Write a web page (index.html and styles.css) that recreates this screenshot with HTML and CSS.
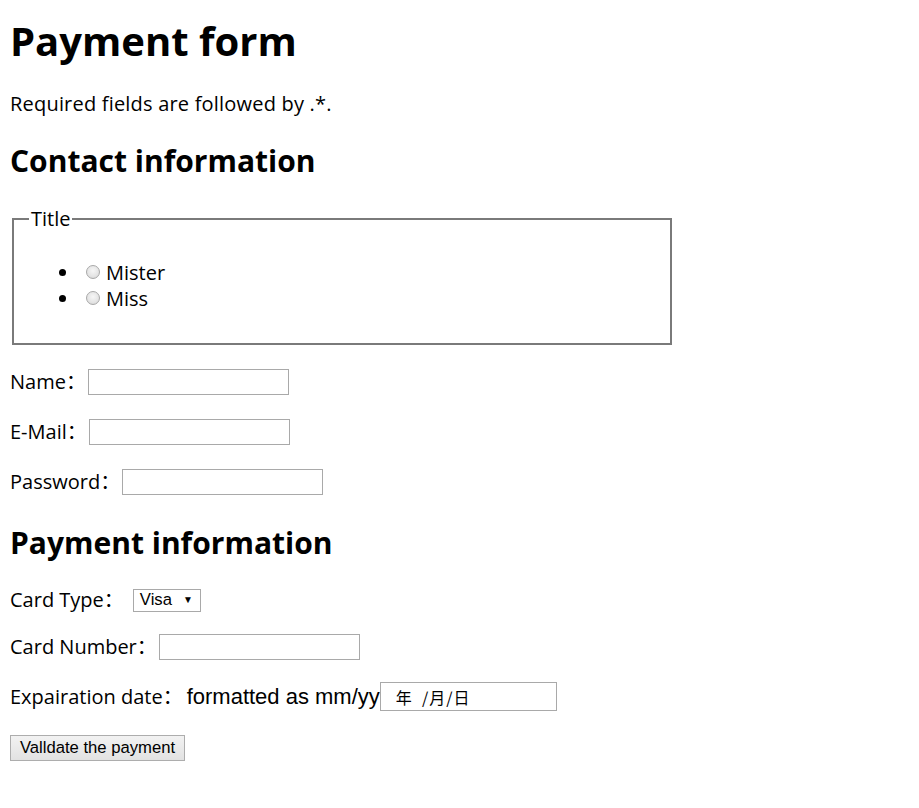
FILE: index.html
```html
<!DOCTYPE html>
<html lang="en">
<head>
<meta charset="utf-8">
<title>Payment form</title>
<link rel="stylesheet" href="styles.css">
</head>
<body>
<form class="form">
  <h1 class="title">Payment form</h1>
  <p class="note">Required fields are followed by .*.</p>
  <section>
    <h2 class="subtitle">Contact information</h2>
    <fieldset class="group">
      <legend class="legend">Title</legend>
      <ul class="choices">
        <li class="choice"><span class="radio"></span><label class="choice-label">Mister</label></li>
        <li class="choice"><span class="radio"></span><label class="choice-label">Miss</label></li>
      </ul>
    </fieldset>
    <p class="row"><label class="lbl">Name：</label><input class="field" type="text"></p>
    <p class="row"><label class="lbl">E-Mail：</label><input class="field" type="text"></p>
    <p class="row"><label class="lbl">Password：</label><input class="field" type="text"></p>
  </section>
  <section>
    <h2 class="subtitle sub2">Payment information</h2>
    <p class="row"><label class="lbl">Card Type：</label><span class="select">Visa<span class="arrow">▼</span></span></p>
    <p class="row row-cn"><label class="lbl">Card Number：</label><input class="field" type="text"></p>
    <p class="row row-date"><label class="lbl tight">Expairation date：</label><span class="hint">formatted as mm/yy</span><span class="date">年 &nbsp;/月/日</span></p>
    <p class="row"><button class="btn" type="button">Valldate the payment</button></p>
  </section>
</form>
</body>
</html>
```

FILE: styles.css
```css
html, body {
  margin: 0;
  padding: 0;
  background: #fff;
}
body {
  padding: 0 10px;
  font-family: "Open Sans", "Noto Sans CJK SC", sans-serif;
  font-size: 20px;
  line-height: 26px;
  color: #000;
}
.form {
  margin: 0;
}
.title {
  font-size: 40px;
  line-height: 52px;
  font-weight: 700;
  margin: 15px 0 0 0;
}
.note {
  margin: 24px 0 0 0;
  letter-spacing: 0.2px;
}
.subtitle {
  font-size: 30px;
  line-height: 40px;
  font-weight: 700;
  margin: 24px 0 0 0;
}
.sub2 {
  margin-top: 28px;
}
.group {
  width: 626px;
  margin: 28px 0 0 2px;
  padding: 31px 15px 31px 15px;
  border: 2px solid #7a7a7a;
}
.legend {
  padding: 0 2px;
  line-height: 20px;
}
.choices {
  margin: 0;
  padding: 0 0 0 51px;
  list-style: disc;
}
.choice {
  display: list-item;
}
.radio {
  display: inline-block;
  width: 14px;
  height: 14px;
  border-radius: 50%;
  border: 1px solid #a8a8a8;
  background: radial-gradient(circle at 50% 40%, #f6f6f6 0, #e4e4e4 60%, #d2d2d2 100%);
  margin: 0 6px 0 6px;
  vertical-align: 1px;
  box-sizing: border-box;
}
.row {
  margin: 24px 0 0 0;
  display: flex;
  align-items: center;
}
.row-cn {
  margin-top: 21px;
}
.row-date {
  margin-top: 22px;
}
.lbl {
  margin-right: 2px;
}
.field {
  box-sizing: border-box;
  width: 201px;
  height: 26px;
  border: 1px solid #a9a9a9;
  padding: 0 4px;
  margin: 0;
  font-size: 14px;
  background: #fff;
}
.select {
  box-sizing: border-box;
  display: inline-flex;
  align-items: center;
  width: 68px;
  height: 23px;
  border: 1px solid #a9a9a9;
  padding: 0 0 0 6px;
  font-family: "Liberation Sans", Arial, sans-serif;
  font-size: 16.67px;
  margin-left: 7px;
}
.arrow {
  font-size: 10px;
  margin-left: 11px;
}
.tight {
  margin-right: 0;
}
.hint {
  font-family: "Liberation Sans", Arial, sans-serif;
  font-size: 22px;
  margin-left: 4px;
}
.date {
  box-sizing: border-box;
  display: inline-flex;
  align-items: center;
  width: 177px;
  height: 29px;
  border: 1px solid #a9a9a9;
  padding: 0 0 0 15px;
  font-family: "Noto Sans CJK SC", sans-serif;
  font-size: 16px;
  letter-spacing: 1px;
}
.btn {
  box-sizing: border-box;
  width: 175px;
  height: 26px;
  margin: 0;
  padding: 0;
  border: 1px solid #adadad;
  border-radius: 0;
  background: linear-gradient(#f2f2f2, #e2e2e2);
  font-family: "Liberation Sans", Arial, sans-serif;
  font-size: 16.67px;
  color: #000;
}
```
